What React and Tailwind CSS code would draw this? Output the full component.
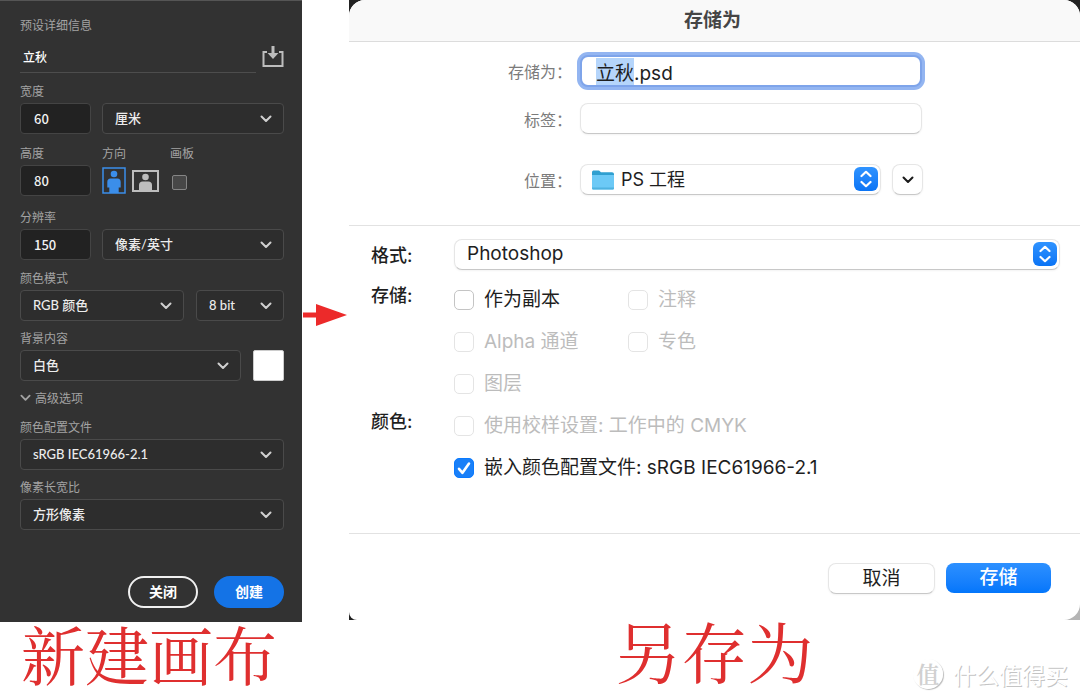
import React, { useEffect, useRef, useState } from "react";

function Chevron({ className }) {
  return (
    <svg viewBox="0 0 12 8" className={className} fill="none" stroke="currentColor" strokeWidth="2" strokeLinecap="round" strokeLinejoin="round">
      <path d="M1.500 1.500 6 6l4.500-4.500" />
    </svg>
  );
}

function DarkSelect({ id, label, options, className }) {
  return (
    <div className={`relative ${className}`}>
      <select
        id={id}
        aria-label={label}
        className="block w-full h-[31px] appearance-none rounded border border-[#4a4a4a] bg-[#2d2d2d] pl-3 pr-8 text-[13px] font-medium text-[#ececec] font-[Lato,'Noto_Sans_CJK_SC',sans-serif]"
      >
        {options.map((o) => (
          <option key={o}>{o}</option>
        ))}
      </select>
      <Chevron className="pointer-events-none absolute right-3 top-3 h-2 w-3 text-[#d0d0d0]" />
    </div>
  );
}

function DarkNumber({ id, value }) {
  return (
    <input
      id={id}
      type="text"
      defaultValue={value}
      className="block w-[71px] h-[31px] rounded border border-[#444] bg-[#222] pl-[13px] text-[13px] font-medium text-[#f2f2f2]"
    />
  );
}

function DarkLabel({ htmlFor, children, className = "" }) {
  return (
    <label htmlFor={htmlFor} className={`block h-4 text-[12px] leading-4 text-[#a3a3a3] ${className}`}>
      {children}
    </label>
  );
}

function PresetPanel() {
  const [orientation, setOrientation] = useState("portrait");

  return (
    <section className="flex h-[622px] flex-col border-t border-[#555] bg-[#323232] pl-5 pr-[18px] pt-4 pb-[14px] font-['Noto_Sans_CJK_SC',sans-serif]">
      <DarkLabel htmlFor="preset-name">预设详细信息</DarkLabel>

      {/* Nom du préréglage */}
      <div className="mt-2 flex items-center justify-between">
        <input
          id="preset-name"
          type="text"
          defaultValue="立秋"
          className="h-8 w-[236px] border-b border-[#4d4d4d] bg-transparent pl-[3px] text-[12px] font-medium text-white"
        />
        <button type="button" aria-label="保存预设">
          <svg viewBox="0 0 22 22" className="size-[22px]" fill="none" stroke="#bdbdbd" strokeWidth="2">
            <path d="M5 6H1.500v14h19V6H17" />
            <path d="M11 0v8" strokeWidth="3" />
            <path d="M5.500 7h11L11 13z" fill="#bdbdbd" stroke="none" />
          </svg>
        </button>
      </div>

      <DarkLabel htmlFor="width" className="mt-[10px]">宽度</DarkLabel>
      <div className="mt-1 flex justify-between gap-[11px]">
        <DarkNumber id="width" value="60" />
        <DarkSelect label="单位" options={["厘米", "像素", "英寸"]} className="flex-1" />
      </div>

      <div className="mt-[11px] flex">
        <div className="w-[82px]">
          <DarkLabel htmlFor="height">高度</DarkLabel>
          <div className="mt-1">
            <DarkNumber id="height" value="80" />
          </div>
        </div>
        <div className="w-[68px]">
          <span className="block h-4 text-[12px] leading-4 text-[#a3a3a3]">方向</span>
          <div className="mt-1 flex h-[31px] items-center gap-[6px]">
            <button type="button" aria-label="纵向" aria-pressed={orientation === "portrait"} onClick={() => setOrientation("portrait")}>
              <svg viewBox="0 0 24 27" className="h-[27px] w-6">
                <rect x="1" y="1" width="22" height="25" fill="none" stroke="#3b8eea" strokeWidth="1.500" />
                <circle cx="12" cy="7" r="3.300" fill="#3b8eea" />
                <path d="M8.500 11.500h7c2 0 3.200 1.500 3.200 3.500v5.500h-2V26H7.300v-5.500h-2V15c0-2 1.200-3.500 3.200-3.500z" fill="#3b8eea" />
              </svg>
            </button>
            <button type="button" aria-label="横向" aria-pressed={orientation === "landscape"} onClick={() => setOrientation("landscape")}>
              <svg viewBox="0 0 27 22" className="h-[22px] w-[27px]">
                <rect x="1" y="1" width="25" height="20" fill="none" stroke="#bdbdbd" strokeWidth="2" />
                <circle cx="13.500" cy="7" r="3.300" fill="#bdbdbd" />
                <path d="M10.500 11.500h6c2 0 3.500 1.500 3.500 3.500v6H7v-6c0-2 1.500-3.500 3.500-3.500z" fill="#bdbdbd" />
              </svg>
            </button>
          </div>
        </div>
        <div>
          <DarkLabel htmlFor="artboard">画板</DarkLabel>
          <div className="mt-1 flex h-[31px] items-center pl-[2px] pt-1">
            <input id="artboard" type="checkbox" className="size-[15px] appearance-none rounded-[2px] border border-[#858585] bg-[#474747] checked:bg-[#3b8eea]" />
          </div>
        </div>
      </div>

      <DarkLabel htmlFor="resolution" className="mt-[13px]">分辨率</DarkLabel>
      <div className="mt-1 flex gap-[11px]">
        <DarkNumber id="resolution" value="150" />
        <DarkSelect label="分辨率单位" options={["像素/英寸", "像素/厘米"]} className="flex-1" />
      </div>

      <DarkLabel htmlFor="mode" className="mt-[10px]">颜色模式</DarkLabel>
      <div className="mt-1 flex gap-3">
        <DarkSelect id="mode" options={["RGB 颜色", "CMYK 颜色"]} className="flex-1" />
        <DarkSelect label="位深度" options={["8 bit", "16 bit"]} className="w-[88px]" />
      </div>

      <DarkLabel htmlFor="background" className="mt-[9px]">背景内容</DarkLabel>
      <div className="mt-1 flex gap-3">
        <DarkSelect id="background" options={["白色", "黑色"]} className="flex-1" />
        <button type="button" aria-label="背景颜色" className="size-[31px] rounded-[2px] border border-[#ccc] bg-white" />
      </div>

      <button type="button" className="mt-[9px] flex h-4 items-center gap-1 text-[12px] leading-4 text-[#a3a3a3]">
        <Chevron className="h-2 w-[11px]" />
        高级选项
      </button>

      <DarkLabel htmlFor="profile" className="mt-[13px]">颜色配置文件</DarkLabel>
      <DarkSelect id="profile" options={["sRGB IEC61966-2.1"]} className="mt-1" />

      <DarkLabel htmlFor="ratio" className="mt-[9px]">像素长宽比</DarkLabel>
      <DarkSelect id="ratio" options={["方形像素"]} className="mt-1" />

      <div className="mt-auto flex justify-end gap-4 text-[14px] leading-6 font-bold text-white">
        <button type="button" className="h-8 w-[70px] rounded-full border-2 border-[#f0f0f0] pb-[3px]">关闭</button>
        <button type="button" className="h-8 w-[70px] rounded-full bg-[#1473e6] pb-[3px]">创建</button>
      </div>
    </section>
  );
}

function Stepper() {
  return (
    <span className="pointer-events-none absolute right-[3px] top-[3px] flex size-6 items-center justify-center rounded-md bg-linear-to-b from-[#2f93ff] to-[#0a74f5]">
      <svg viewBox="0 0 12 18" className="h-[18px] w-3" fill="none" stroke="white" strokeWidth="2.200" strokeLinecap="round" strokeLinejoin="round">
        <path d="M1.500 6 6 1.800 10.500 6M1.500 12 6 16.200 10.500 12" />
      </svg>
    </span>
  );
}

function CheckItem({ label, checked = false, disabled = false, className = "" }) {
  return (
    <label className={`flex h-[42px] items-center gap-[10px] text-[19px] ${disabled ? "text-[#bcbcbc]" : "text-[#1e1e1e]"} ${className}`}>
      <span className="relative flex size-5">
        <input
          type="checkbox"
          defaultChecked={checked}
          disabled={disabled}
          className="peer size-5 appearance-none rounded-[5px] border border-[#c4c4c4] bg-white checked:border-[#0a7aff] checked:bg-[#1a80f8] disabled:border-[#e4e4e4]"
        />
        <svg viewBox="0 0 20 20" className="pointer-events-none absolute inset-0 hidden size-5 peer-checked:block" fill="none" stroke="white" strokeWidth="2.600" strokeLinecap="round" strokeLinejoin="round">
          <path d="M5 10.800 8.500 14.800 15 5.500" />
        </svg>
      </span>
      {label}
    </label>
  );
}

function SaveDialog() {
  const nameRef = useRef(null);

  // Sélectionner le nom sans l'extension
  useEffect(() => {
    nameRef.current.focus();
    nameRef.current.setSelectionRange(0, 2);
  }, []);

  const fieldLabel = "w-[223px] pt-[2px] text-right text-[16px] text-[#7b7b7b]";
  const sideLabel = "h-[34px] w-[83px] shrink-0 text-[18px] leading-[34px] font-medium text-[#1e1e1e]";
  const raised = "border border-[#e6e6e6] border-b-[#c8c8c8] bg-white shadow-xs";

  return (
    <div className="relative bg-[#222]">
      <span className="absolute bottom-0 right-0 size-4 bg-[#b5b5b5]" />
      <form onSubmit={(e) => e.preventDefault()} className="relative rounded-t-2xl rounded-bl-lg rounded-br-2xl bg-white font-[Inter,'Noto_Sans_CJK_SC',sans-serif]">
        <h1 className="h-[42px] rounded-t-2xl border-b border-[#dcdcdc] bg-[#f9f9f9] pr-1 text-center text-[19px] leading-[42px] font-bold text-[#454545]">
          存储为
        </h1>

        <div className="border-b border-[#e2e2e2] pt-[13px] pb-[30px]">
          <div className="flex items-center gap-2">
            <label htmlFor="filename" className={fieldLabel}>存储为：</label>
            <input
              id="filename"
              ref={nameRef}
              type="text"
              defaultValue="立秋.psd"
              className="h-8 w-[342px] rounded-lg border-2 border-[#7ea4ea] bg-white pl-[14px] text-[19px] text-[#1e1e1e] caret-transparent outline-none ring-3 ring-[#93b5f1] selection:bg-[#b5d5fb] selection:text-[#1e1e1e]"
            />
          </div>
          <div className="mt-4 flex items-center gap-2">
            <label htmlFor="tags" className={fieldLabel}>标签：</label>
            <input id="tags" type="text" className={`h-[31px] w-[342px] rounded-lg px-3 text-[19px] outline-none ${raised}`} />
          </div>
          <div className="mt-[30px] flex items-center gap-2">
            <label htmlFor="location" className={fieldLabel}>位置：</label>
            <div className="flex w-[343px] gap-[11px]">
              <div className="relative flex-1">
                <select id="location" className={`block h-[31px] w-full appearance-none rounded-lg pl-10 text-[18px] text-[#1e1e1e] ${raised}`}>
                  <option>PS 工程</option>
                </select>
                <svg viewBox="0 0 22 20" className="pointer-events-none absolute left-3 top-[6px] h-5 w-[22px]">
                  <path d="M0 2.500C0 1 .8.500 2 .500h5l2 1.800h11c1.200 0 2 .7 2 2V8H0z" fill="#2f9fd0" />
                  <path d="M0 5h22v13c0 1-.7 1.500-1.500 1.500h-19C.7 19.500 0 19 0 18z" fill="#6cc9f6" />
                  <path d="M0 17.500h22v.5c0 1-.7 1.500-1.500 1.500h-19C.7 19.500 0 19 0 18z" fill="#4eb2e0" />
                </svg>
                <Stepper />
              </div>
              <button type="button" aria-label="展开" className={`flex size-[31px] items-center justify-center rounded-lg ${raised}`}>
                <Chevron className="h-2 w-3 text-[#1a1a1a]" />
              </button>
            </div>
          </div>
        </div>

        <div className="border-b border-[#e2e2e2] pt-[13px] pb-[44px] pl-[22px] pr-5">
          <div className="flex">
            <label htmlFor="format" className={sideLabel}>格式:</label>
            <div className="relative flex-1">
              <select id="format" className={`block h-[31px] w-full appearance-none rounded-lg pl-3 text-[19px] text-[#1e1e1e] ${raised}`}>
                <option>Photoshop</option>
              </select>
              <Stepper />
            </div>
          </div>

          <div role="group" aria-label="存储" className="mt-[6px] flex">
            <span className={sideLabel}>存储:</span>
            <div className="grid grid-cols-[174px_1fr]">
              <CheckItem label="作为副本" />
              <CheckItem label="注释" disabled />
              <CheckItem label="Alpha 通道" disabled />
              <CheckItem label="专色" disabled />
              <CheckItem label="图层" disabled />
            </div>
          </div>

          <div role="group" aria-label="颜色" className="flex">
            <span className={sideLabel}>颜色:</span>
            <div>
              <CheckItem label="使用校样设置: 工作中的 CMYK" disabled />
              <CheckItem label="嵌入颜色配置文件: sRGB IEC61966-2.1" checked />
            </div>
          </div>
        </div>

        <div className="flex justify-end gap-[11px] pt-[29px] pb-[26px] pr-[29px] text-[19px]">
          <button type="button" className={`h-[31px] w-[107px] rounded-lg leading-7 text-[#1e1e1e] ${raised}`}>取消</button>
          <button type="submit" className="h-[30px] w-[105px] rounded-lg bg-linear-to-b from-[#2c90ff] to-[#0376fb] leading-7 font-medium text-white">存储</button>
        </div>
      </form>
    </div>
  );
}

export default function App() {
  const caption = "text-center leading-[60px] font-normal text-[#df2f2f] font-['Noto_Serif_CJK_SC','Noto_Sans_CJK_SC',serif]";

  return (
    <main className="relative flex min-h-screen bg-white">
      <div className="w-[302px] shrink-0">
        <PresetPanel />
        <p className={`pr-1 text-[64px] ${caption}`}>新建画布</p>
      </div>

      <div className="w-[47px] shrink-0 pt-[304px]">
        <svg viewBox="0 0 47 22" className="h-[22px] w-[47px]" fill="#ec2a2a">
          <path d="M1 8.500h13V0l31 11-31 11v-8.500H1z" />
        </svg>
      </div>

      <div className="flex-1">
        <SaveDialog />
        <p className={`text-[66px] ${caption}`}>另存为</p>
      </div>

      {/* Filigrane */}
      <div className="absolute bottom-[10px] right-3 flex items-center gap-[10px] font-['Noto_Sans_CJK_SC',sans-serif] text-[23px] leading-8 text-white text-shadow-[1px_1px_0px_#c4c4c4]">
        <span className="flex size-[30px] items-center justify-center rounded-full border border-white font-semibold text-[#d0d0d0] shadow-[1px_1px_1px_#bbb] text-shadow-none font-['Noto_Serif_CJK_SC','Noto_Sans_CJK_SC',serif]">值</span>
        <span>什么值得买</span>
      </div>
    </main>
  );
}
